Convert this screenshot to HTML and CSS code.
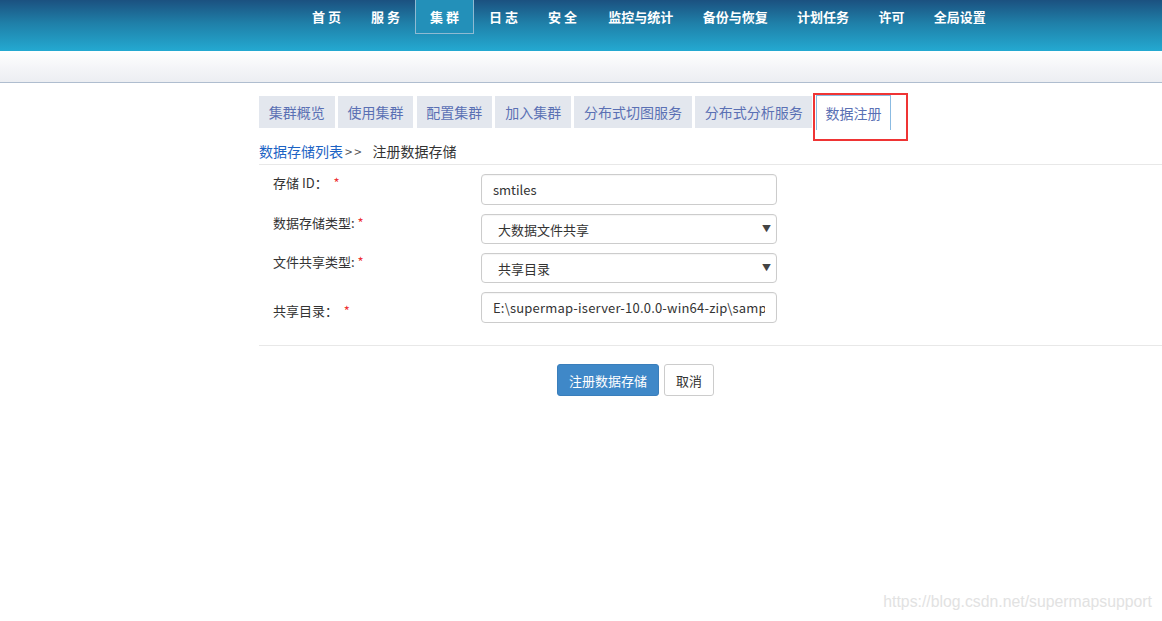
FILE: index.html
```html
<!DOCTYPE html>
<html lang="zh-CN">
<head>
<meta charset="utf-8">
<title>数据注册</title>
<link rel="stylesheet" href="styles.css">
</head>
<body>
<header class="top">
  <nav class="mainnav">
    <a class="nav-item sp">首页</a>
    <a class="nav-item sp">服务</a>
    <a class="nav-item sp active">集群</a>
    <a class="nav-item sp">日志</a>
    <a class="nav-item sp">安全</a>
    <a class="nav-item">监控与统计</a>
    <a class="nav-item">备份与恢复</a>
    <a class="nav-item">计划任务</a>
    <a class="nav-item">许可</a>
    <a class="nav-item">全局设置</a>
  </nav>
</header>
<div class="subbar"></div>

<main class="content">
  <div class="tabs">
    <a class="tab">集群概览</a>
    <a class="tab">使用集群</a>
    <a class="tab">配置集群</a>
    <a class="tab">加入集群</a>
    <a class="tab">分布式切图服务</a>
    <a class="tab">分布式分析服务</a>
    <a class="tab active">数据注册<span class="mark"></span></a>
  </div>

  <div class="crumb"><a class="crumb-link">数据存储列表</a><span class="crumb-sep">&gt;&gt;</span>注册数据存储</div>

  <form class="form">
    <div class="row">
      <label class="label">存储 ID：&nbsp;&nbsp;<span class="req">*</span></label>
      <input class="control" type="text" value="smtiles">
    </div>
    <div class="row">
      <label class="label">数据存储类型:&nbsp;<span class="req">*</span></label>
      <div class="select-wrap"><select class="control select"><option>大数据文件共享</option></select></div>
    </div>
    <div class="row">
      <label class="label">文件共享类型:&nbsp;<span class="req">*</span></label>
      <div class="select-wrap"><select class="control select"><option>共享目录</option></select></div>
    </div>
    <div class="row row-center">
      <label class="label">共享目录：&nbsp;&nbsp;<span class="req">*</span></label>
      <input class="control long" type="text" value="E:\supermap-iserver-10.0.0-win64-zip\samples\data">
    </div>
  </form>

  <div class="actions">
    <button class="btn btn-primary" type="button">注册数据存储</button>
    <button class="btn btn-default" type="button">取消</button>
  </div>
</main>

<div class="watermark">https://blog.csdn.net/supermapsupport</div>
</body>
</html>
```

FILE: styles.css
```css
* { box-sizing: border-box; }
html, body { margin: 0; padding: 0; }
body {
  width: 1162px;
  height: 621px;
  overflow: hidden;
  background: #fff;
  font-family: "Microsoft YaHei", "Noto Sans CJK SC", sans-serif;
  color: #333;
  font-size: 13px;
}

.top {
  height: 51px;
  background: linear-gradient(to bottom, #1b5180 0%, #1f7fa8 45%, #24a9d1 100%);
}
.mainnav {
  display: flex;
  padding-left: 297px;
  height: 51px;
  align-items: flex-start;
}
.nav-item {
  display: block;
  height: 34px;
  line-height: 33px;
  padding: 0 13.7px;
  color: #fff;
  font-weight: bold;
  font-size: 13px;
  border: 1px solid transparent;
  border-top: 0;
}
.nav-item.sp { letter-spacing: 3px; padding: 0 11px 0 14px; }
.nav-item.sp + .nav-item:not(.sp) { margin-left: 1.5px; }
.nav-item.active {
  background: #2390b9;
  border-color: #8fbad2;
}

.subbar {
  height: 32px;
  background: linear-gradient(to bottom, #ffffff 0%, #f3f4f7 60%, #eceef2 100%);
  border-bottom: 1px solid #afbdcf;
}

.content {
  margin-left: 259px;
  padding-top: 13px;
}

.tabs {
  display: flex;
  gap: 3.3px;
  height: 32px;
  align-items: flex-start;
}
.tab {
  display: block;
  height: 32px;
  line-height: 32px;
  padding: 0 9.75px;
  font-size: 14px;
  color: #5a70b4;
  background: #e3e7ee;
  flex: none;
}
.tab.active {
  position: relative;
  margin-top: -1px;
  height: 35px;
  line-height: 34px;
  background: #fff;
  border: 1px solid #8bbbe2;
  border-bottom: 0;
  padding: 0 8.75px;
}
.mark {
  position: absolute;
  left: -4px;
  top: -3px;
  width: 95px;
  height: 48px;
  border: 2px solid #ef3434;
  pointer-events: none;
}

.crumb {
  margin-top: 14px;
  font-size: 14px;
  line-height: 18px;
  padding-bottom: 3px;
  border-bottom: 1px solid #e8e8e8;
  color: #333;
}
.crumb-link { color: #1c63c4; }
.crumb-sep { color: #555; margin: 0 9px 0 2px; font-size: 13px; letter-spacing: 2px; }

.form {
  padding-top: 9px;
  padding-bottom: 22px;
  border-bottom: 1px solid #e8e8e8;
  display: flex;
  flex-direction: column;
  gap: 9px;
}
.row {
  display: flex;
  align-items: flex-start;
}
.row-center { align-items: center; }
.row-center .label { padding-top: 5px; }
.label {
  width: 222px;
  padding-left: 14px;
  font-size: 13px;
  line-height: 17px;
  color: #333;
}
.req { color: #e33; }
.control {
  width: 296px;
  height: 31px;
  border: 1px solid #ccc;
  border-radius: 4px;
  padding: 0 11px;
  font-family: "Microsoft YaHei", "Noto Sans CJK SC", sans-serif;
  font-size: 13px;
  color: #333;
  background: #fff;
  outline: none;
  box-shadow: inset 0 1px 1px rgba(0,0,0,0.04);
}
.control.long { letter-spacing: 0.2px; }
.row:nth-child(2) .control,
.row:nth-child(3) .control { height: 30px; }
.select-wrap {
  position: relative;
  width: 296px;
}
.select {
  appearance: none;
  -webkit-appearance: none;
  padding-left: 16px;
  display: block;
}
.select-wrap::after {
  content: "▼";
  position: absolute;
  right: 6px;
  top: 8px;
  font-size: 9px;
  color: #444;
  pointer-events: none;
}

.actions {
  display: flex;
  gap: 5px;
  padding-left: 298px;
  padding-top: 18px;
}
.btn {
  height: 32px;
  border-radius: 3px;
  font-family: "Microsoft YaHei", "Noto Sans CJK SC", sans-serif;
  font-size: 13px;
  padding: 0 11px;
  cursor: pointer;
}
.btn-primary {
  background: #3f88c8;
  border: 1px solid #3a7ebb;
  color: #fff;
}
.btn-default {
  background: #fff;
  border: 1px solid #ccc;
  color: #333;
}

.watermark {
  position: absolute;
  right: 10px;
  top: 593px;
  font-family: "Liberation Sans", Arial, sans-serif;
  font-size: 15.8px;
  color: #e2e2e2;
}
```
